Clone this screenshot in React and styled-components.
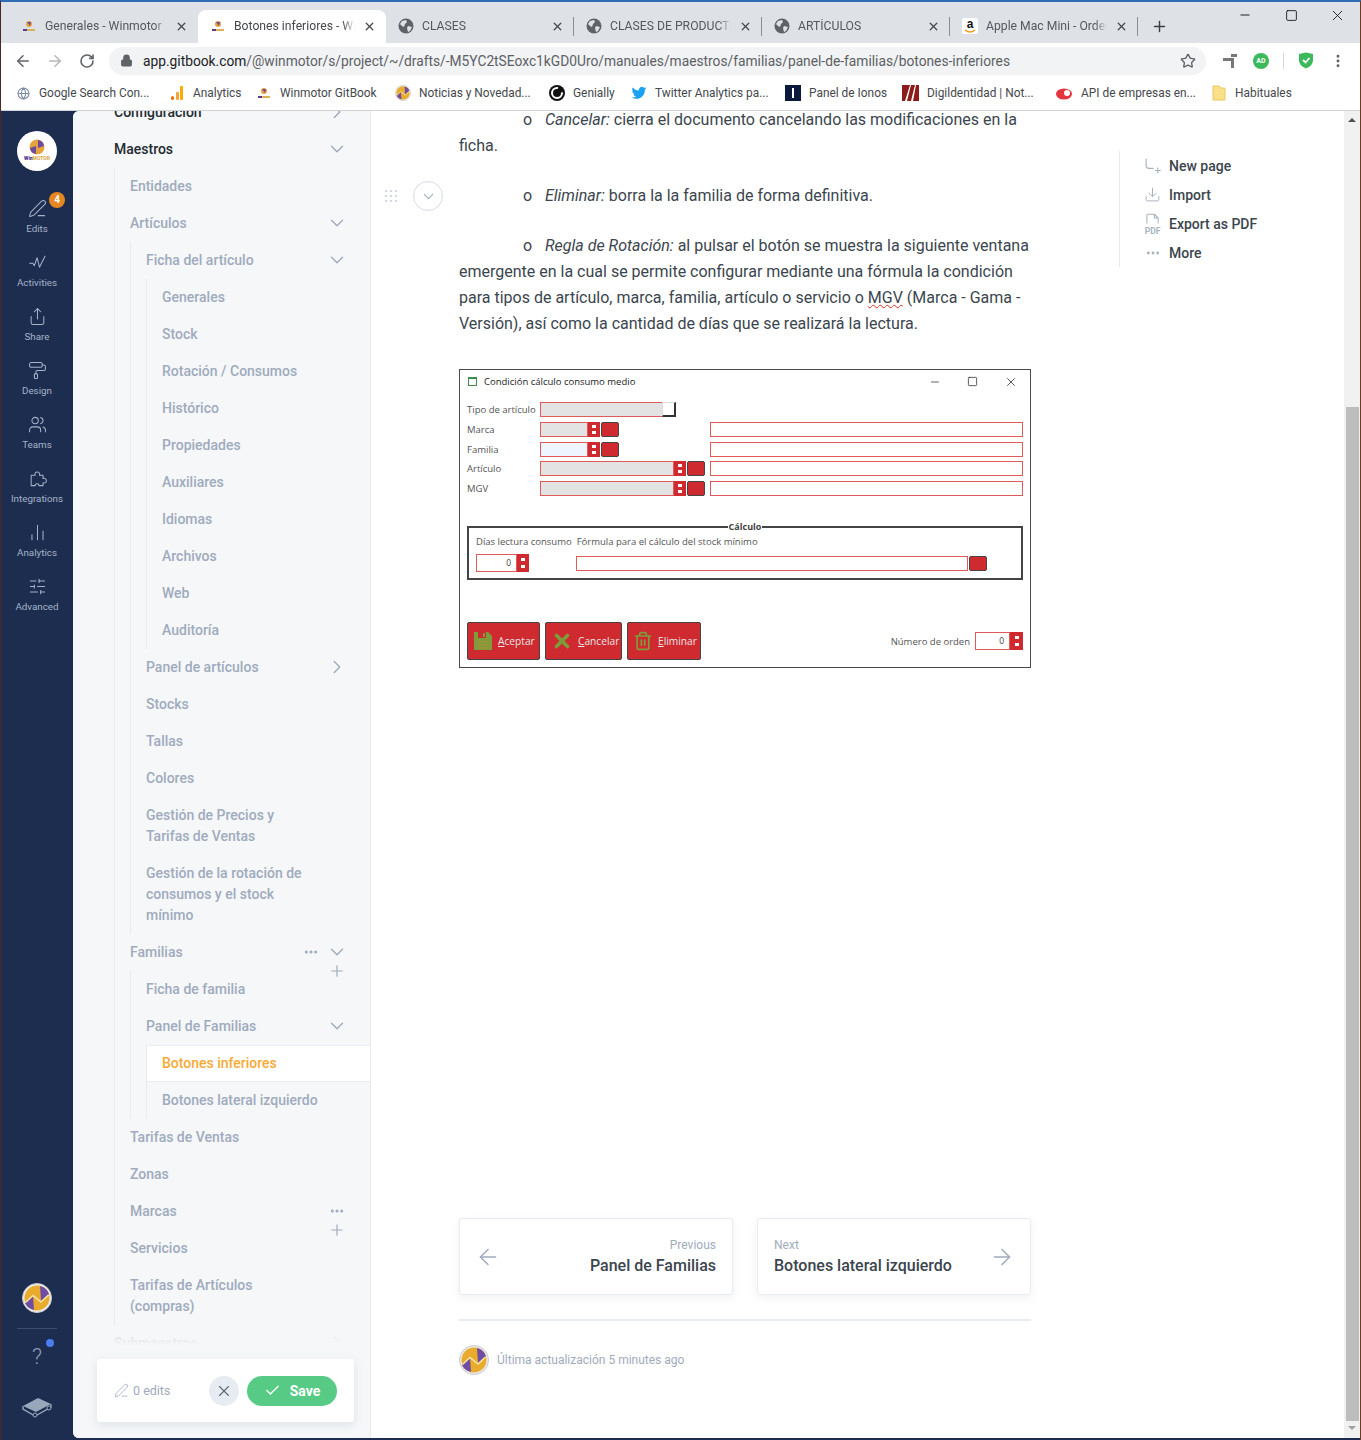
import React from 'react';
import styled, { createGlobalStyle } from 'styled-components';
import {
  ArrowLeft,
  ArrowRight,
  ChevronDown,
  ChevronRight,
  Check,
  X,
  Plus,
  Minus,
  Square,
  RotateCw,
  Lock,
  Star,
  Globe,
  MoreVertical,
  MoreHorizontal,
  PenLine,
  Share,
  PaintRoller,
  Users,
  SlidersHorizontal,
  Download,
  Trash2,
} from 'lucide-react';

const GlobalStyle = createGlobalStyle`
  html, body {
    margin: 0;
    padding: 0;
    background: #1c2d50;
  }
  * {
    box-sizing: border-box;
  }
`;

const Page = styled.div`
  width: 1361px;
  height: 1440px;
  overflow: hidden;
  display: flex;
  flex-direction: column;
  font-family: Roboto, 'Liberation Sans', sans-serif;
  border-top: 2px solid #2f6cb5;
  border-left: 1px solid #4a2a28;
  border-right: 1px solid #6b3a20;
  background: #1c2d50;
`;

/* browser chrome */
const TabStrip = styled.div`
  height: 41px;
  flex: none;
  background: #dee1e6;
  display: flex;
  align-items: flex-end;
  padding-left: 8px;
  position: relative;
`;

const Tab = styled.div`
  width: ${(p) => p.$w || 188}px;
  height: 33px;
  flex: none;
  display: flex;
  align-items: center;
  gap: 8px;
  padding: 0 10px 1px 12px;
  font-size: 12.2px;
  position: relative;
  border-radius: 8px 8px 0 0;
  background: ${(p) => (p.$active ? '#fff' : 'transparent')};
  color: ${(p) => (p.$active ? '#45484c' : '#55585d')};
  &::after {
    content: '';
    display: ${(p) => (p.$divider ? 'block' : 'none')};
    position: absolute;
    right: 0;
    top: 7px;
    height: 19px;
    width: 1px;
    background: #8b8e93;
  }
`;

const TabTitle = styled.span`
  flex: 1;
  white-space: nowrap;
  overflow: hidden;
  mask-image: linear-gradient(to right, #000 90%, transparent);
`;

const Favicon = styled.span`
  width: 16px;
  height: 16px;
  flex: none;
  display: flex;
  align-items: center;
  justify-content: center;
  color: #5f6368;
`;

const NewTab = styled.div`
  width: 30px;
  height: 30px;
  display: flex;
  align-items: center;
  justify-content: center;
  margin: 0 0 2px 6px;
  color: #3c4043;
`;

const WindowButtons = styled.div`
  position: absolute;
  right: 0;
  top: 0;
  display: flex;
  color: #111;
`;

const WindowButton = styled.div`
  width: 46px;
  height: 26px;
  display: flex;
  align-items: center;
  justify-content: center;
`;

const Toolbar = styled.div`
  height: 35px;
  flex: none;
  background: #fff;
  display: flex;
  align-items: center;
  padding: 0 10px 0 6px;
  color: #5f6368;
`;

const NavIcon = styled.span`
  width: 32px;
  display: flex;
  justify-content: center;
  color: ${(p) => (p.$off ? '#b4b6b9' : '#5f6368')};
`;

const Omnibox = styled.div`
  width: 1097px;
  height: 28px;
  margin-left: 6px;
  border-radius: 14px;
  background: #f1f3f4;
  display: flex;
  align-items: center;
  padding: 0 10px 0 11px;
  font-size: 13.78px;
  color: #5d6064;
  white-space: nowrap;
`;

const Host = styled.span`
  color: #202124;
`;

const UrlText = styled.span`
  flex: 1;
  margin-left: 10px;
`;

const ToolbarExtras = styled.div`
  display: flex;
  align-items: center;
  gap: 14px;
  margin-left: 15px;
  & > :last-child {
    margin-left: 2px;
  }
`;

const ExtDivider = styled.span`
  width: 1px;
  height: 16px;
  background: #d5d7da;
`;

const AdBadge = styled.span`
  width: 16px;
  height: 16px;
  border-radius: 50%;
  background: #3cb95a;
  color: #fff;
  font-size: 7px;
  font-weight: 700;
  display: flex;
  align-items: center;
  justify-content: center;
`;

const Bookmarks = styled.div`
  height: 33px;
  flex: none;
  background: #fff;
  border-bottom: 1px solid #d0d2d5;
  display: flex;
  align-items: center;
  padding: 0 0 2px 14px;
  font-size: 11.9px;
  color: #45484c;
`;

const Bookmark = styled.div`
  width: ${(p) => p.$w}px;
  flex: none;
  display: flex;
  align-items: center;
  gap: 8px;
  white-space: nowrap;
`;

/* gitbook shell */
const Shell = styled.div`
  flex: 1;
  min-height: 0;
  display: flex;
  padding-bottom: 2px;
`;

const Rail = styled.nav`
  width: 72px;
  flex: none;
  display: flex;
  flex-direction: column;
  align-items: center;
  padding-top: 20px;
`;

const LogoCircle = styled.div`
  width: 40px;
  height: 40px;
  border-radius: 50%;
  background: #fff;
  display: flex;
  flex-direction: column;
  align-items: center;
  justify-content: center;
  margin-bottom: 19px;
  padding-bottom: 2px;
`;

const LogoWord = styled.span`
  font-size: 5px;
  line-height: 6px;
  font-weight: 700;
  color: #d9a23a;
  b {
    color: #4a2f86;
    font-weight: 900;
  }
`;

const RailItem = styled.div`
  width: 72px;
  height: 54px;
  display: flex;
  flex-direction: column;
  align-items: center;
  justify-content: center;
  gap: 5px;
  font-size: 9.8px;
  line-height: 12px;
  color: #a6b3c7;
  position: relative;
`;

const CountBadge = styled.span`
  position: absolute;
  top: 2px;
  left: 48px;
  width: 16px;
  height: 16px;
  border-radius: 50%;
  background: #e8861f;
  color: #fff;
  font-size: 10px;
  font-weight: 700;
  display: flex;
  align-items: center;
  justify-content: center;
`;

const RailFooter = styled.div`
  margin-top: auto;
  width: 100%;
  display: flex;
  flex-direction: column;
  align-items: center;
  padding-bottom: 19px;
`;

const RailRule = styled.div`
  width: 40px;
  height: 1px;
  background: #3c4d70;
  margin: 15px 0 15px;
`;

const HelpWrap = styled.div`
  position: relative;
  color: #8d9bb3;
  font-size: 22px;
  font-weight: 300;
  line-height: 26px;
  margin-bottom: 25px;
`;

const BlueDot = styled.span`
  position: absolute;
  top: -5px;
  left: 14px;
  width: 8px;
  height: 8px;
  border-radius: 50%;
  background: #4a7df0;
`;

const Workspace = styled.div`
  flex: 1;
  min-width: 0;
  display: flex;
  background: #fff;
  border-radius: 6px 0 0 6px;
  overflow: hidden;
`;

const Sidebar = styled.aside`
  width: 298px;
  flex: none;
  background: #f5f7f9;
  border-right: 1px solid #e6ecf1;
  position: relative;
  overflow: hidden;
`;

const SideTree = styled.div`
  margin-top: -17px;
  padding-left: 41px;
`;

const Row = styled.div`
  position: relative;
  display: flex;
  justify-content: space-between;
  padding: 8px 22px 8px 0;
  font-size: 14px;
  line-height: 21px;
  font-weight: 500;
  color: ${(p) => (p.$strong ? '#242a31' : '#9fabbd')};
`;

const RowLabel = styled.span`
  width: ${(p) => (p.$narrow ? '170px' : 'auto')};
`;

const RowIcons = styled.span`
  position: absolute;
  right: ${(p) => p.$r || 22}px;
  top: 7px;
  height: 22px;
  color: #9fabbd;
  display: flex;
  align-items: center;
  gap: 7px;
`;

const PlusOver = styled.span`
  position: absolute;
  right: 24px;
  top: 28px;
  color: #9fabbd;
  display: flex;
`;

const Nest = styled.div`
  padding-left: 15px;
  border-left: 1px solid #e6ecf1;
`;

const ActiveRow = styled.div`
  margin: 0 -3px 0 -16px;
  padding: 7px 0 7px 15px;
  font-size: 14px;
  line-height: 21px;
  font-weight: 500;
  color: #f9a935;
  background: #fff;
  border: 1px solid #e6ecf1;
  border-right: 0;
`;

const SideFade = styled.div`
  position: absolute;
  left: 0;
  right: 0;
  bottom: 0;
  height: 105px;
  background: linear-gradient(to bottom, rgba(245, 247, 249, 0.85), #f5f7f9 12%);
`;

const SaveBar = styled.div`
  position: absolute;
  left: 24px;
  bottom: 16px;
  width: 257px;
  height: 63px;
  background: #fff;
  border-radius: 3px;
  box-shadow: 0 3px 10px rgba(116, 129, 141, 0.16);
  display: flex;
  align-items: center;
  padding: 0 17px;
  font-size: 12.5px;
  color: #9fabbd;
`;

const EditsCount = styled.span`
  display: flex;
  align-items: center;
  gap: 4px;
  flex: 1;
`;

const CloseRound = styled.span`
  width: 30px;
  height: 30px;
  border-radius: 50%;
  background: #e6ecf1;
  color: #5c6975;
  display: flex;
  align-items: center;
  justify-content: center;
`;

const SaveButton = styled.span`
  width: 90px;
  height: 30px;
  margin-left: 8px;
  border-radius: 15px;
  background: #57ca85;
  color: #fff;
  font-size: 14px;
  font-weight: 700;
  display: flex;
  align-items: center;
  justify-content: center;
  gap: 9px;
`;

/* article */
const Main = styled.main`
  flex: 1;
  min-width: 0;
  display: flex;
  padding-left: 88px;
  position: relative;
`;

const Article = styled.article`
  width: 572px;
  flex: none;
  margin-top: -4px;
`;

const Para = styled.p`
  position: relative;
  margin: 0 0 24px;
  font-size: 16px;
  line-height: 26px;
  color: #3b454e;
  em {
    font-style: italic;
  }
`;

const Bullet = styled.span`
  display: inline-block;
  margin-left: 64px;
  width: 22px;
`;

const Squiggle = styled.span`
  text-decoration: underline wavy #d93025 1px;
`;

const BlockTools = styled.div`
  position: absolute;
  left: -74px;
  top: -2px;
  display: flex;
  align-items: center;
  gap: 16px;
  color: #b8c2cc;
`;

const DragDots = styled.span`
  width: 12px;
  height: 12px;
  display: grid;
  grid-template-columns: repeat(3, 2px);
  grid-auto-rows: 2px;
  gap: 3px;
  i {
    background: #c5ced8;
    border-radius: 50%;
  }
`;

const CircleToggle = styled.span`
  width: 30px;
  height: 30px;
  border-radius: 50%;
  border: 1px solid #d4dbe3;
  color: #9fabbd;
  display: flex;
  align-items: center;
  justify-content: center;
`;

/* dialog screenshot embedded in the article */
const Dialog = styled.div`
  width: 572px;
  height: 299px;
  margin-top: 32px;
  border: 1px solid #4a4a4a;
  background: #fff;
  display: flex;
  flex-direction: column;
  padding: 0 7px 7px 7px;
  font-family: 'Open Sans', Lato, sans-serif;
  font-size: 9.5px;
  color: #555;
`;

const DialogTitle = styled.div`
  height: 23px;
  flex: none;
  display: flex;
  align-items: center;
  gap: 7px;
  padding-left: 1px;
  font-size: 9.5px;
  font-weight: 500;
  color: #222;
`;

const DialogTitleIcon = styled.span`
  width: 9px;
  height: 9px;
  border: 1.5px solid #3f8a4d;
  border-top-width: 2.5px;
`;

const DialogTitleText = styled.span`
  flex: 1;
`;

const DialogControls = styled.span`
  display: flex;
  align-items: center;
  gap: 26px;
  padding-right: 5px;
  color: #222;
`;

const FieldGrid = styled.div`
  display: grid;
  grid-template-columns: 73px 170px 1fr;
  grid-auto-rows: 15px;
  row-gap: 4.75px;
  align-items: center;
  margin-top: 9px;
`;

const FieldLabel = styled.span`
  white-space: nowrap;
`;

const FieldCell = styled.span`
  display: flex;
  height: 15px;
  grid-column: ${(p) => p.$span || 'auto'};
`;

const RedInput = styled.span`
  display: block;
  height: ${(p) => p.$h || 15}px;
  flex: ${(p) => (p.$w ? 'none' : 1)};
  width: ${(p) => (p.$w ? `${p.$w}px` : 'auto')};
  border: 1px solid #e05a5a;
  background: ${(p) => p.$fill || '#fff'};
  font-size: 8.5px;
  line-height: ${(p) => (p.$h || 15) - 2}px;
  text-align: right;
  padding-right: 5px;
  color: #444;
`;

const CheckEnd = styled.span`
  width: 14px;
  height: 15px;
  margin-left: -14px;
  background: #fff;
  border: 1px solid #ddd;
  border-right: 2px solid #333;
  border-bottom: 2px solid #333;
`;

const Spinner = styled.span`
  width: ${(p) => p.$w || 12}px;
  height: ${(p) => p.$h || 15}px;
  flex: none;
  background: #cf2a30;
  display: flex;
  flex-direction: column;
  align-items: center;
  justify-content: space-evenly;
  i {
    width: 4px;
    height: 3px;
    background: #fff;
  }
`;

const Picker = styled.span`
  width: 18px;
  height: 15px;
  flex: none;
  margin-left: 1px;
  background: #cf2a30;
  border: 1.5px solid #444;
  border-radius: 2px;
`;

const CalcBox = styled.fieldset`
  margin: 26px 0 0;
  padding: 0 7px;
  height: 58px;
  border: 2px solid #444;
  display: block;
  legend {
    margin: 0 auto;
    padding: 0 1px;
    font-weight: 700;
    color: #444;
    line-height: 10px;
    font-size: 9px;
  }
`;

const CalcLabels = styled.div`
  display: flex;
  gap: 5px;
  margin-top: 2px;
  height: 14px;
  align-items: center;
  white-space: nowrap;
`;

const CalcInputs = styled.div`
  display: flex;
  margin-top: 6px;
  height: 18px;
  align-items: center;
`;

const CalcSpacer = styled.span`
  width: 47px;
  flex: none;
`;

const DialogFooter = styled.div`
  margin-top: auto;
  display: flex;
  align-items: center;
`;

const RedButton = styled.span`
  width: ${(p) => p.$w}px;
  height: 38px;
  margin-right: 5px;
  background: #cf2a30;
  border: 1.5px solid #444;
  border-radius: 2px;
  color: #e6e6e6;
  font-size: 10.2px;
  display: flex;
  align-items: center;
  gap: 5px;
  padding-left: 5px;
  white-space: nowrap;
  svg {
    flex: none;
  }
`;

const OrderLabel = styled.span`
  margin-left: auto;
  margin-right: 5px;
`;

/* prev / next cards */
const Pager = styled.div`
  display: flex;
  gap: 24px;
  margin-top: 550px;
`;

const PageCard = styled.div`
  flex: 1;
  height: 77px;
  border: 1px solid #e6ecf1;
  border-radius: 3px;
  box-shadow: 0 3px 8px rgba(116, 129, 141, 0.1);
  display: flex;
  flex-direction: ${(p) => (p.$reverse ? 'row-reverse' : 'row')};
  align-items: center;
  justify-content: space-between;
  padding: 0 ${(p) => (p.$reverse ? 15 : 16)}px 0 ${(p) => (p.$reverse ? 16 : 15)}px;
  color: #9fabbd;
`;

const CardText = styled.div`
  text-align: ${(p) => (p.$right ? 'right' : 'left')};
`;

const CardCaption = styled.div`
  font-size: 12px;
  line-height: 18px;
  color: #9fabbd;
`;

const CardTitle = styled.div`
  font-size: 16px;
  line-height: 24px;
  font-weight: 500;
  color: #3b454e;
`;

const Rule = styled.div`
  height: 2px;
  background: #e6ecf1;
  margin-top: 24px;
`;

const Updated = styled.div`
  display: flex;
  align-items: center;
  gap: 8px;
  margin-top: 24px;
  font-size: 12px;
  color: #9fabbd;
`;

const PageActions = styled.ul`
  list-style: none;
  width: 200px;
  height: 116px;
  margin: 40px 0 0 88px;
  padding: 0 0 0 24px;
  border-left: 1px solid #e6ecf1;
`;

const ActionItem = styled.li`
  height: 29px;
  display: flex;
  align-items: center;
  gap: 8px;
  font-size: 14px;
  font-weight: 500;
  color: #3b454e;
  svg {
    color: #a8b3bf;
  }
`;

const ActionIconSlot = styled.span`
  width: 17px;
  display: flex;
  flex-direction: column;
  align-items: center;
`;

const PdfWord = styled.span`
  color: #a8b3bf;
  font-size: 8.5px;
  font-weight: 700;
  line-height: 8px;
  margin-top: -1px;
`;

const ScrollBar = styled.div`
  width: 16px;
  background: #f1f1f1;
  display: flex;
  flex-direction: column;
  align-items: center;
  position: absolute;
  right: 0;
  top: 0;
  bottom: 0;
`;

const ScrollThumb = styled.div`
  width: 13px;
  height: 1014px;
  margin: 296px 0 5px;
  background: #bdbdbd;
`;

const UpArrow = styled.span`
  width: 0;
  height: 0;
  margin: 7px 0 -11px;
  border-left: 4px solid transparent;
  border-right: 4px solid transparent;
  border-bottom: 4px solid #505050;
`;

const DownArrow = styled.span`
  width: 0;
  height: 0;
  border-left: 4px solid transparent;
  border-right: 4px solid transparent;
  border-top: 4px solid #a0a0a0;
`;

const tabs = [
  { title: 'Generales - Winmotor', icon: 'wm', w: 189 },
  { title: 'Botones inferiores - Winmotor', icon: 'wm', active: true, w: 188 },
  { title: 'CLASES', icon: 'globe', divider: true, w: 188 },
  { title: 'CLASES DE PRODUCTO', icon: 'globe', divider: true, w: 188 },
  { title: 'ARTÍCULOS', icon: 'globe', divider: true, w: 188 },
  { title: 'Apple Mac Mini - Ordenador', icon: 'amazon', divider: true, w: 188 },
];

const WinmotorMark = ({ size = 16 }) => (
  <svg width={size} height={size} viewBox="0 0 16 16">
    <circle cx="8" cy="6" r="3" fill="#e8a23a" />
    <path d="M6 4l3 4 1-4z" fill="#6d4ba0" />
    <rect x="2" y="11" width="12" height="2" fill="#d9b35a" />
    <rect x="2" y="11" width="4" height="2" fill="#5a3c91" />
  </svg>
);

const LogoBall = () => (
  <svg width="16" height="16" viewBox="0 0 16 16">
    <circle cx="8" cy="8" r="7.500" fill="#e8a23a" />
    <path d="M9 1a7 7 0 0 1 6 6L9 9zM7 15a7 7 0 0 1-6-6l6-2z" fill="#6d4ba0" />
  </svg>
);

const AmazonMark = () => (
  <svg width="16" height="16" viewBox="0 0 16 16">
    <rect width="16" height="16" rx="2" fill="#fff" />
    <text x="8" y="10" textAnchor="middle" fontSize="12" fontWeight="700" fontFamily="Liberation Sans" fill="#111">a</text>
    <path d="M3 12c3 2.4 7 2.4 10 0" stroke="#f39a1f" strokeWidth="1.5" fill="none" />
  </svg>
);

const GlobeMark = () => (
  <svg width="16" height="16" viewBox="0 0 16 16">
    <circle cx="8" cy="8" r="7.500" fill="#5f6368" />
    <path d="M4 3l4-1 1 2-2 2-1 3-2-1-2-2zM10 8l4 1-2 4-2 1-1-4z" fill="#dee1e6" />
  </svg>
);

const AvatarMark = ({ size = 30 }) => (
  <svg width={size} height={size} viewBox="0 0 30 30">
    <circle cx="15" cy="15" r="14.500" fill="#ececec" stroke="#c8c8c8" />
    <circle cx="15" cy="15" r="12.500" fill="#e9ab2c" />
    <path d="M18 3a12.500 12.500 0 0 1 9 8l-8 7z" fill="#6f4da3" />
    <path d="M12 27a12.500 12.500 0 0 1-9-7l8-7z" fill="#6f4da3" />
    <path d="M3.500 19.500L11 12.500l8 6.500 7.500-7" stroke="#f7e4a5" strokeWidth="1.6" fill="none" />
  </svg>
);

const BookMark = () => (
  <svg width="32" height="24" viewBox="0 0 32 24">
    <path d="M2 11L17 3l13 6-15 8z" fill="#98a7ba" />
    <path d="M2 11v3l12 7 2-1M30 9v3l-14 8" stroke="#98a7ba" strokeWidth="1.4" fill="none" />
    <circle cx="14" cy="20" r="2" fill="#1c2d50" stroke="#98a7ba" />
    <circle cx="28" cy="13" r="2" fill="#1c2d50" stroke="#98a7ba" />
  </svg>
);

const lineIcon = (d) => {
  const LineIcon = ({ size = 19, strokeWidth = 1.3 }) => (
    <svg width={size} height={size} viewBox="0 0 24 24" fill="none" stroke="currentColor" strokeWidth={strokeWidth} strokeLinecap="round" strokeLinejoin="round">
      <path d={d} />
    </svg>
  );
  return LineIcon;
};

const ActivityIcon = lineIcon('M2 13h4l2 3 3.500-10 3 12 7-14');
const PuzzleIcon = lineIcon('M4 8h5a3 3 0 1 1 5.500 0H19v4a3 3 0 1 1 0 5.500V21h-5a2.500 2.500 0 0 0-5 0H4z');
const BarsIcon = lineIcon('M5 15v6M12 3v18M19 10v11');
const NewPageIcon = lineIcon('M3 3v9a4 4 0 0 0 4 4h6M16 19h7M19.500 15.500v7');
const DocTopIcon = lineIcon('M3 16V4a2 2 0 0 1 2-2h10l6 6v8M15 2v6h6');

const SaveFilled = () => (
  <svg width="20" height="20" viewBox="0 0 20 20">
    <path d="M1 1h14l4 4v14H1z" fill="#7d9c3a" />
    <rect x="5" y="1" width="8" height="6" fill="#cf2a30" />
    <rect x="10" y="2" width="2" height="4" fill="#7d9c3a" />
    <path d="M4 11h12M4 14h12M4 17h12" stroke="#b98a3a" strokeWidth="1.200" />
  </svg>
);

const TabIcon = ({ kind }) => {
  if (kind === 'wm') return <Favicon><WinmotorMark /></Favicon>;
  if (kind === 'amazon') return <Favicon><AmazonMark /></Favicon>;
  return <Favicon><GlobeMark /></Favicon>;
};

const bookmarkItems = [
  { label: 'Google Search Con...', w: 154, icon: <Favicon><Globe size={13} color="#7a8aa0" /></Favicon> },
  {
    label: 'Analytics',
    w: 87,
    icon: (
      <svg width="16" height="16" viewBox="0 0 16 16">
        <rect x="2" y="11" width="3" height="4" rx="1.5" fill="#e8710a" />
        <rect x="7" y="7" width="3" height="8" rx="1" fill="#f2a43a" />
        <rect x="11" y="1" width="3" height="14" rx="1" fill="#f9ab00" />
      </svg>
    ),
  },
  { label: 'Winmotor GitBook', w: 139, icon: <WinmotorMark /> },
  {
    label: 'Noticias y Novedad...',
    w: 154,
    icon: <AvatarMark size={16} />,
  },
  {
    label: 'Genially',
    w: 82,
    icon: (
      <svg width="16" height="16" viewBox="0 0 16 16">
        <circle cx="8" cy="8" r="8" fill="#111" />
        <circle cx="8" cy="8" r="5" fill="none" stroke="#fff" strokeWidth="2" strokeDasharray="24 6" />
      </svg>
    ),
  },
  {
    label: 'Twitter Analytics pa...',
    w: 154,
    icon: (
      <svg width="16" height="16" viewBox="0 0 24 24" fill="#1da1f2">
        <path d="M23 5a9 9 0 0 1-2.6.7A4.500 4.500 0 0 0 22.400 3.200a9 9 0 0 1-2.900 1.100 4.500 4.500 0 0 0-7.700 4.100A12.800 12.800 0 0 1 2.500 3.700a4.500 4.500 0 0 0 1.400 6 4.500 4.500 0 0 1-2-.6c0 2.200 1.500 4.100 3.600 4.500a4.500 4.500 0 0 1-2 .1 4.500 4.500 0 0 0 4.200 3.100A9 9 0 0 1 1 18.700 12.800 12.800 0 0 0 8 20.700c8.300 0 12.900-6.900 12.900-12.900v-.6A9 9 0 0 0 23 5z" />
      </svg>
    ),
  },
  {
    label: 'Panel de Ionos',
    w: 117,
    icon: (
      <svg width="16" height="16" viewBox="0 0 16 16">
        <rect width="16" height="16" fill="#0b1a3a" />
        <rect x="7" y="3" width="2" height="10" fill="#fff" />
      </svg>
    ),
  },
  {
    label: 'Digildentidad | Not...',
    w: 154,
    icon: (
      <svg width="17" height="16" viewBox="0 0 17 16">
        <rect width="17" height="16" fill="#8c1c1c" />
        <path d="M3 16L8 0h1L5 16zM9 16l4-16h1l-3 16z" fill="#fff" />
      </svg>
    ),
  },
  {
    label: 'API de empresas en...',
    w: 155,
    icon: (
      <svg width="17" height="16" viewBox="0 0 17 16">
        <ellipse cx="8" cy="9" rx="8" ry="5.500" fill="#e5343d" />
        <circle cx="11" cy="8" r="3" fill="#fff" />
      </svg>
    ),
  },
  {
    label: 'Habituales',
    w: 90,
    icon: (
      <svg width="16" height="16" viewBox="0 0 16 16">
        <path d="M2 1h6l2 2h4v12H2z" fill="#fbe08a" stroke="#e9c85c" />
      </svg>
    ),
  },
];

const rail = [
  { label: 'Edits', Icon: PenLine, badge: 4 },
  { label: 'Activities', Icon: ActivityIcon },
  { label: 'Share', Icon: Share },
  { label: 'Design', Icon: PaintRoller },
  { label: 'Teams', Icon: Users },
  { label: 'Integrations', Icon: PuzzleIcon },
  { label: 'Analytics', Icon: BarsIcon },
  { label: 'Advanced', Icon: SlidersHorizontal },
];

const Chevron = ({ right }) => (
  <RowIcons>
    {right ? <ChevronRight size={22} strokeWidth={1.5} /> : <ChevronDown size={22} strokeWidth={1.5} />}
  </RowIcons>
);

const SimpleRows = ({ labels }) =>
  labels.map((label) => <Row key={label}><RowLabel>{label}</RowLabel></Row>);

const Dots = () => (
  <DragDots>
    {Array.from({ length: 9 }).map((_, i) => <i key={i} />)}
  </DragDots>
);

const SpinnerBox = (props) => (
  <Spinner {...props}>
    <i />
    <i />
  </Spinner>
);

const FieldRow = ({ label, inputWidth, fill }) => (
  <>
    <FieldLabel>{label}</FieldLabel>
    <FieldCell>
      <RedInput $w={inputWidth} $fill={fill} />
      <SpinnerBox />
      <Picker />
    </FieldCell>
    <FieldCell>
      <RedInput />
    </FieldCell>
  </>
);

export default function App() {
  return (
    <Page>
      <GlobalStyle />
      <TabStrip>
        {tabs.map((t) => (
          <Tab key={t.title} $w={t.w} $active={t.active} $divider={t.divider}>
            <TabIcon kind={t.icon} />
            <TabTitle>{t.title}</TabTitle>
            <X size={13} strokeWidth={2.4} color="#45484c" />
          </Tab>
        ))}
        <NewTab><Plus size={17} strokeWidth={2} /></NewTab>
        <WindowButtons>
          <WindowButton><Minus size={14} strokeWidth={1.6} /></WindowButton>
          <WindowButton><Square size={13} strokeWidth={1.6} /></WindowButton>
          <WindowButton><X size={17} strokeWidth={1.2} /></WindowButton>
        </WindowButtons>
      </TabStrip>

      <Toolbar>
        <NavIcon><ArrowLeft size={18} /></NavIcon>
        <NavIcon $off><ArrowRight size={18} /></NavIcon>
        <NavIcon><RotateCw size={16} strokeWidth={2.4} /></NavIcon>
        <Omnibox>
          <Lock size={13} fill="#5f6368" />
          <UrlText>
            <Host>app.gitbook.com</Host>/@winmotor/s/project/~/drafts/-M5YC2tSEoxc1kGD0Uro/manuales/maestros/familias/panel-de-familias/botones-inferiores
          </UrlText>
          <Star size={16} />
        </Omnibox>
        <ToolbarExtras>
          <svg width="18" height="16" viewBox="0 0 16 16" fill="#777">
            <path d="M9 1h6v3H9zM1 5h10v3H1zM9 5h3v10H9z" />
          </svg>
          <AdBadge>AD</AdBadge>
          <ExtDivider />
          <svg width="16" height="17" viewBox="0 0 16 17">
            <path d="M1 2l7-1.500L15 2v6c0 4-3 7-7 8.500C4 15 1 12 1 8z" fill="#3cb95a" />
            <path d="M5 8l2.500 2.500L11.500 6" stroke="#fff" strokeWidth="1.8" fill="none" />
          </svg>
          <MoreVertical size={16} strokeWidth={2.4} />
        </ToolbarExtras>
      </Toolbar>

      <Bookmarks>
        {bookmarkItems.map((b) => (
          <Bookmark key={b.label} $w={b.w}>
            {b.icon}
            <span>{b.label}</span>
          </Bookmark>
        ))}
      </Bookmarks>

      <Shell>
        <Rail>
          <LogoCircle>
            <LogoBall />
            <LogoWord><b>Win</b>MOTOR</LogoWord>
          </LogoCircle>
          {rail.map(({ label, Icon, badge }) => (
            <RailItem key={label}>
              <Icon size={19} strokeWidth={1.3} />
              {label}
              {badge && <CountBadge>{badge}</CountBadge>}
            </RailItem>
          ))}
          <RailFooter>
            <AvatarMark />
            <RailRule />
            <HelpWrap>?<BlueDot /></HelpWrap>
            <BookMark />
          </RailFooter>
        </Rail>

        <Workspace>
          <Sidebar>
            <SideTree>
              <Row $strong>Configuración<Chevron right /></Row>
              <Row $strong>Maestros<Chevron /></Row>
              <Nest>
                <SimpleRows labels={['Entidades']} />
                <Row>Artículos<Chevron /></Row>
                <Nest>
                  <Row>Ficha del artículo<Chevron /></Row>
                  <Nest>
                    <SimpleRows
                      labels={[
                        'Generales',
                        'Stock',
                        'Rotación / Consumos',
                        'Histórico',
                        'Propiedades',
                        'Auxiliares',
                        'Idiomas',
                        'Archivos',
                        'Web',
                        'Auditoría',
                      ]}
                    />
                  </Nest>
                  <Row>Panel de artículos<Chevron right /></Row>
                  <SimpleRows labels={['Stocks', 'Tallas', 'Colores']} />
                  <Row><RowLabel $narrow>Gestión de Precios y Tarifas de Ventas</RowLabel></Row>
                  <Row><RowLabel $narrow>Gestión de la rotación de consumos y el stock mínimo</RowLabel></Row>
                </Nest>
                <Row>
                  Familias
                  <RowIcons>
                    <MoreHorizontal size={16} strokeWidth={2.6} />
                    <ChevronDown size={22} strokeWidth={1.5} />
                  </RowIcons>
                  <PlusOver><Plus size={18} strokeWidth={1.6} /></PlusOver>
                </Row>
                <Nest>
                  <Row>Ficha de familia</Row>
                  <Row>Panel de Familias<Chevron /></Row>
                  <Nest>
                    <ActiveRow>Botones inferiores</ActiveRow>
                    <Row>Botones lateral izquierdo</Row>
                  </Nest>
                </Nest>
                <SimpleRows labels={['Tarifas de Ventas', 'Zonas']} />
                <Row>
                  Marcas
                  <RowIcons $r={25}><MoreHorizontal size={16} strokeWidth={2.6} /></RowIcons>
                  <PlusOver><Plus size={18} strokeWidth={1.6} /></PlusOver>
                </Row>
                <SimpleRows labels={['Servicios']} />
                <Row><RowLabel $narrow>Tarifas de Artículos (compras)</RowLabel></Row>
              </Nest>
              <Row $strong>Submaestros<Chevron right /></Row>
            </SideTree>
            <SideFade />
            <SaveBar>
              <EditsCount><PenLine size={15} strokeWidth={1.3} />0 edits</EditsCount>
              <CloseRound><X size={18} strokeWidth={1.5} /></CloseRound>
              <SaveButton><Check size={17} strokeWidth={1.8} />Save</SaveButton>
            </SaveBar>
          </Sidebar>

          <Main>
            <Article>
              <Para>
                <Bullet>o</Bullet>
                <em>Cancelar:</em> cierra el documento cancelando las modificaciones en la ficha.
              </Para>
              <Para>
                <BlockTools>
                  <Dots />
                  <CircleToggle><ChevronDown size={17} strokeWidth={1.5} /></CircleToggle>
                </BlockTools>
                <Bullet>o</Bullet>
                <em>Eliminar:</em> borra la la familia de forma definitiva.
              </Para>
              <Para>
                <Bullet>o</Bullet>
                <em>Regla de Rotación:</em> al pulsar el botón se muestra la siguiente ventana emergente en la cual se permite configurar mediante una fórmula la condición para tipos de artículo, marca, familia, artículo o servicio o <Squiggle>MGV</Squiggle> (Marca - Gama - Versión), así como la cantidad de días que se realizará la lectura.
              </Para>

              <Dialog>
                <DialogTitle>
                  <DialogTitleIcon />
                  <DialogTitleText>Condición cálculo consumo medio</DialogTitleText>
                  <DialogControls>
                    <Minus size={12} strokeWidth={1.4} />
                    <Square size={11} strokeWidth={1.6} />
                    <X size={14} strokeWidth={1.3} />
                  </DialogControls>
                </DialogTitle>
                <FieldGrid>
                  <FieldLabel>Tipo de artículo</FieldLabel>
                  <FieldCell $span="2 / 4">
                    <RedInput $w={136} $fill="#e3e3e3" />
                    <CheckEnd />
                  </FieldCell>
                  <FieldRow label="Marca" inputWidth={48} fill="#e3e3e3" />
                  <FieldRow label="Familia" inputWidth={48} fill="#eef5ff" />
                  <FieldRow label="Artículo" inputWidth={134} fill="#e3e3e3" />
                  <FieldRow label="MGV" inputWidth={134} fill="#e3e3e3" />
                </FieldGrid>
                <CalcBox>
                  <legend>Cálculo</legend>
                  <CalcLabels>
                    <span>Días lectura consumo</span>
                    <span>Fórmula para el cálculo del stock mínimo</span>
                  </CalcLabels>
                  <CalcInputs>
                    <RedInput $w={41} $h={18}>0</RedInput>
                    <SpinnerBox $h={18} />
                    <CalcSpacer />
                    <RedInput $w={392} />
                    <Picker />
                  </CalcInputs>
                </CalcBox>
                <DialogFooter>
                  <RedButton $w={73}><SaveFilled /><span><u>A</u>ceptar</span></RedButton>
                  <RedButton $w={77}><X size={22} color="#7d9c3a" strokeWidth={4} /><span><u>C</u>ancelar</span></RedButton>
                  <RedButton $w={74}><Trash2 size={20} color="#7d9c3a" /><span><u>E</u>liminar</span></RedButton>
                  <OrderLabel>Número de orden</OrderLabel>
                  <RedInput $w={35} $h={18}>0</RedInput>
                  <SpinnerBox $w={13} $h={18} />
                </DialogFooter>
              </Dialog>

              <Pager>
                <PageCard>
                  <ArrowLeft size={26} strokeWidth={1.4} />
                  <CardText $right>
                    <CardCaption>Previous</CardCaption>
                    <CardTitle>Panel de Familias</CardTitle>
                  </CardText>
                </PageCard>
                <PageCard $reverse>
                  <ArrowRight size={26} strokeWidth={1.4} />
                  <CardText>
                    <CardCaption>Next</CardCaption>
                    <CardTitle>Botones lateral izquierdo</CardTitle>
                  </CardText>
                </PageCard>
              </Pager>
              <Rule />
              <Updated>
                <AvatarMark />
                Última actualización 5 minutes ago
              </Updated>
            </Article>

            <PageActions>
              <ActionItem>
                <ActionIconSlot><NewPageIcon size={17} strokeWidth={1.6} /></ActionIconSlot>
                New page
              </ActionItem>
              <ActionItem>
                <ActionIconSlot><Download size={17} strokeWidth={1.4} /></ActionIconSlot>
                Import
              </ActionItem>
              <ActionItem>
                <ActionIconSlot>
                  <DocTopIcon size={15} strokeWidth={1.7} />
                  <PdfWord>PDF</PdfWord>
                </ActionIconSlot>
                Export as PDF
              </ActionItem>
              <ActionItem>
                <ActionIconSlot><MoreHorizontal size={16} strokeWidth={2.4} /></ActionIconSlot>
                More
              </ActionItem>
            </PageActions>

            <ScrollBar>
              <UpArrow />
              <ScrollThumb />
              <DownArrow />
            </ScrollBar>
          </Main>
        </Workspace>
      </Shell>
    </Page>
  );
}
